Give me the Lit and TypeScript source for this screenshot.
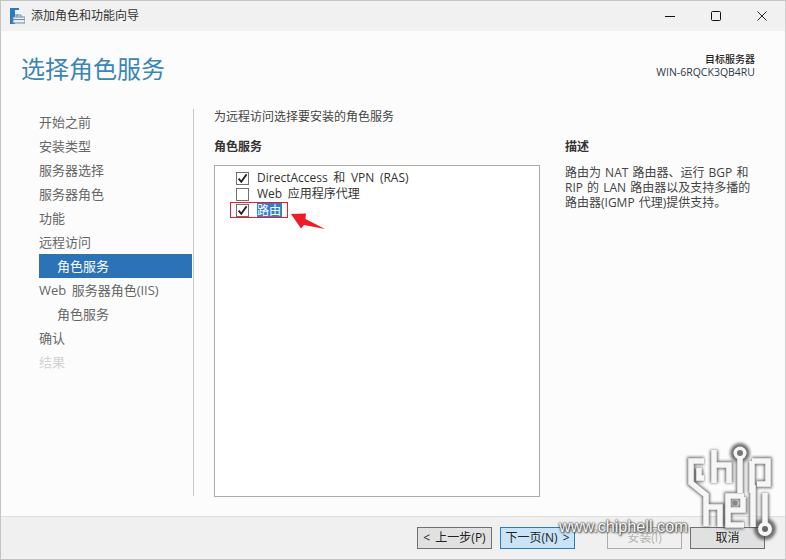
import { LitElement, html, css, svg } from "lit";
import { customElement } from "lit/decorators.js";

const nav = [
  { t: "开始之前" },
  { t: "安装类型" },
  { t: "服务器选择" },
  { t: "服务器角色" },
  { t: "功能" },
  { t: "远程访问" },
  { t: "角色服务", sub: true, sel: true },
  { t: "Web 服务器角色(IIS)" },
  { t: "角色服务", sub: true },
  { t: "确认" },
  { t: "结果", off: true },
];

const logoPaths = [
  "M704 461H691V483L706 495V526",
  "M699 468V478H704",
  "M714 450V483M714 465H729V483",
  "M740 456V493",
  "M752 461H768V484H757M752 461V493",
  "M706 507H720V527",
  "M744 496H728V525H744M728 510H743V497",
  "M753 485V527",
  "M765 493V524",
];

@customElement("app-root")
export class AppRoot extends LitElement {
  static styles = css`
    :host {
      display: block;
      position: relative;
      width: 786px;
      height: 560px;
      overflow: hidden;
      font-family: "Open Sans", "Noto Sans CJK SC", sans-serif;
      font-size: 12px;
      color: #333;
    }
    .win {
      box-sizing: border-box;
      width: 786px;
      height: 560px;
      display: flex;
      flex-direction: column;
      background: #fcfcfc;
      border: 1px solid #c4c4c4;
      border-right-color: #d0d0d0;
    }
    .title {
      height: 30px;
      flex: none;
      display: flex;
      align-items: center;
      background: #f1f1f1;
    }
    .title .ico { margin-left: 9px; }
    .title .txt { margin-left: 6px; flex: 1; color: #333; line-height: 30px; }
    .wc {
      width: 46px;
      height: 30px;
      display: flex;
      align-items: center;
      justify-content: center;
    }
    .head {
      height: 77px;
      flex: none;
      display: flex;
      justify-content: space-between;
      padding: 0 30px 0 20px;
    }
    h1 {
      margin: 21px 0 0;
      font-weight: 400;
      font-size: 24px;
      line-height: 34px;
      color: #3a86b4;
    }
    .server {
      margin-top: 22px;
      text-align: right;
      color: #2b3a4a;
      font-size: 10.5px;
      line-height: 13px;
    }
    .server .lbl { font-size: 10px; font-weight: 500; color: #222; }
    .main {
      flex: 1;
      display: flex;
      min-height: 0;
      padding: 1px 0 20px 38px;
    }
    .nav {
      width: 153px;
      flex: none;
      font-size: 13px;
      color: #666;
      margin-top: 1px;
      word-spacing: 2px;
    }
    .nav div {
      height: 24px;
      line-height: 24px;
      white-space: nowrap;
    }
    .nav .sub { padding-left: 18px; }
    .nav .sel { background: #2b72b6; color: #fff; }
    .nav .off { color: #d2d2d2; }
    .divider { width: 1px; margin-left: 1px; background: #c8c8c8; flex: none; }
    .content {
      flex: 1;
      padding: 0 0 0 20px;
      display: flex;
      flex-direction: column;
    }
    .lead { line-height: 16px; margin-top: 0; color: #444; }
    .cols { flex: 1; display: flex; margin-top: 14px; min-height: 0; }
    .left { width: 326px; flex: none; display: flex; flex-direction: column; }
    .cap { font-weight: 700; line-height: 16px; color: #333; font-size: 12px; }
    .list {
      flex: 1;
      margin-top: 10px;
      margin-bottom: -1px;
      border: 1px solid #ababab;
      background: #fff;
      padding: 4px 0 0 21px;
      word-spacing: 2.5px;
    }
    .row {
      height: 16px;
      display: flex;
      align-items: center;
      line-height: 16px;
      color: #333;
    }
    .cb {
      box-sizing: border-box;
      width: 13px;
      height: 13px;
      border: 1px solid #707070;
      background: #fff;
      margin-right: 8px;
      display: flex;
      flex: none;
    }
    .hl { background: #2f7fd0; color: #fff; padding: 0 1px 0 0; line-height: 15px; }
    .desc { margin-left: 25px; width: 205px; }
    .desc p { margin: 10px 0 0; line-height: 15px; color: #444; word-spacing: 1px; }
    .foot {
      box-sizing: border-box;
      height: 43px;
      flex: none;
      background: #f0f0f0;
      border-top: 1px solid #dfdfdf;
      display: flex;
      align-items: flex-start;
      padding: 10px 20px 0 416px;
    }
    .btn {
      box-sizing: border-box;
      width: 75px;
      height: 22px;
      border: 1px solid #707070;
      background: #e1e1e1;
      font-size: 12px;
      line-height: 20px;
      text-align: center;
      color: #222;
      white-space: nowrap;
      word-spacing: 2px;
    }
    .btn + .btn { margin-left: 8px; }
    .btn.next { background: #c9e4f8; border-color: #2a7bc0; }
    .btn.dis { margin-left: 32px; background: #f0f0f0; border-color: #adadad; color: #b5b5b5; }
    .redbox {
      position: absolute;
      box-sizing: border-box;
      left: 230px;
      top: 202px;
      width: 58px;
      height: 16px;
      border: 1px solid #ee1c25;
    }
    .arrow { position: absolute; left: 285px; top: 208px; }
    .logo { position: absolute; left: 0; top: 0; pointer-events: none; }
    .wm {
      position: absolute;
      left: 559px;
      top: 515px;
      font-size: 16.2px;
      line-height: 22px;
      color: #f8f8f8;
      font-family: "Liberation Sans", sans-serif;
      white-space: nowrap;
      text-shadow: 0 0 2px #444, 0 0 2px #444, 1px 1px 2px #555;
    }
  `;

  private check() {
    return html`<svg width="11" height="11" viewBox="0 0 11 11">
      <path d="M1.6 5.6L4.3 8.8L9.6 1.2" fill="none" stroke="#222" stroke-width="1.9" />
    </svg>`;
  }

  private row(label: unknown, checked: boolean) {
    return html`<div class="row">
      <span class="cb">${checked ? this.check() : ""}</span>${label}
    </div>`;
  }

  render() {
    return html`
      <div class="win">
        <div class="title">
          <svg class="ico" width="15" height="16" viewBox="0 0 15 16">
            <path d="M0 0H5V16H0Z" fill="#2b7ac0" />
            <path d="M5 0H9V2H5Z" fill="#2b7ac0" />
            <path d="M5 6H8V8H5Z" fill="#9cc3e4" />
            <path d="M3 9H15V15H3Z" fill="#e9eef2" stroke="#6d8ea8" />
            <path d="M7 9V7H11V9" fill="none" stroke="#6d8ea8" />
            <path d="M3 11.5H15" stroke="#6d8ea8" />
          </svg>
          <span class="txt">添加角色和功能向导</span>
          <span class="wc"><svg width="10" height="10"><path d="M0 5.5H10" stroke="#111" /></svg></span>
          <span class="wc"><svg width="10" height="10"><rect x=".5" y=".5" width="9" height="9" rx="1" fill="none" stroke="#111" /></svg></span>
          <span class="wc"><svg width="10" height="10"><path d="M.5 .5L9.5 9.5M9.5 .5L.5 9.5" stroke="#222" /></svg></span>
        </div>
        <div class="head">
          <h1>选择角色服务</h1>
          <div class="server">
            <div class="lbl">目标服务器</div>
            <div>WIN-6RQCK3QB4RU</div>
          </div>
        </div>
        <div class="main">
          <div class="nav">
            ${nav.map(
              (n) => html`<div class="${n.sub ? "sub" : ""} ${n.sel ? "sel" : ""} ${n.off ? "off" : ""}">${n.t}</div>`
            )}
          </div>
          <div class="divider"></div>
          <div class="content">
            <div class="lead">为远程访问选择要安装的角色服务</div>
            <div class="cols">
              <div class="left">
                <div class="cap">角色服务</div>
                <div class="list">
                  ${this.row("DirectAccess 和 VPN (RAS)", true)}
                  ${this.row("Web 应用程序代理", false)}
                  ${this.row(html`<span class="hl">路由</span>`, true)}
                </div>
              </div>
              <div class="desc">
                <div class="cap">描述</div>
                <p>路由为 NAT 路由器、运行 BGP 和<br />RIP 的 LAN 路由器以及支持多播的<br />路由器(IGMP 代理)提供支持。</p>
              </div>
            </div>
          </div>
        </div>
        <div class="foot">
          <div class="btn">&lt; 上一步(P)</div>
          <div class="btn next">下一页(N) &gt;</div>
          <div class="btn dis">安装(I)</div>
          <div class="btn">取消</div>
        </div>
      </div>
      <div class="redbox"></div>
      <svg class="arrow" width="42" height="26" viewBox="285 208 42 26">
        <path d="M291 214L306 213.5L305.5 219L325 229L304 225L301 228.5Z" fill="#ee1c25" />
      </svg>
      <svg class="logo" width="786" height="560" viewBox="0 0 786 560" fill="none">
        <defs>
          <filter id="sh" x="-10%" y="-10%" width="120%" height="120%">
            <feGaussianBlur stdDeviation="1.5" />
          </filter>
        </defs>
        <g stroke="#444" stroke-width="8" filter="url(#sh)" opacity=".75">
          ${logoPaths.map((d) => svg`<path d=${d} />`)}
          <circle cx="740" cy="453" r="6" />
          <circle cx="765" cy="529" r="7" />
        </g>
        <g stroke="#f6f6f6" stroke-width="5.5">
          ${logoPaths.map((d) => svg`<path d=${d} />`)}
        </g>
        <circle cx="740" cy="453" r="6.5" fill="#f6f6f6" />
        <circle cx="740" cy="453" r="3" fill="#777" />
        <circle cx="735" cy="503" r="2.8" fill="#888" />
        <circle cx="765" cy="529" r="7" fill="#f6f6f6" />
        <circle cx="765" cy="529" r="3" fill="#666" />
      </svg>
      <div class="wm">www.chiphell.com</div>
    `;
  }
}
